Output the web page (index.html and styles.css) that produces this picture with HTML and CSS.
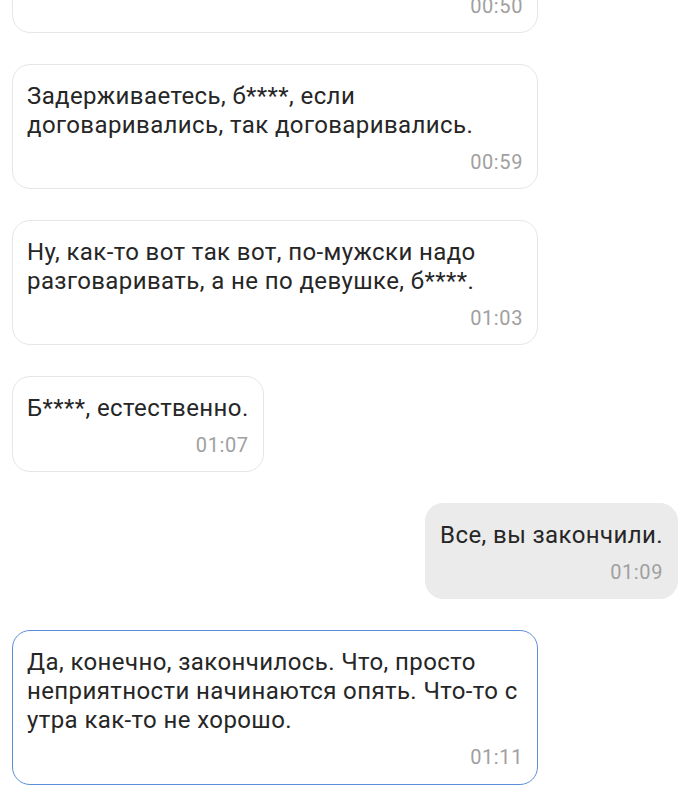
FILE: index.html
```html
<!DOCTYPE html>
<html lang="ru">
<head>
    <meta charset="UTF-8">
    <meta name="viewport" content="width=device-width, initial-scale=1.0">
    <title>Чат</title>
    <link rel="stylesheet" href="styles.css">
</head>
<body>
    <div class="chat">
        <div class="msg in clipped">
            <div class="time">00:50</div>
        </div>

        <div class="msg in">
            <p class="text">Задерживаетесь, б****, если договаривались, так договаривались.</p>
            <div class="time">00:59</div>
        </div>

        <div class="msg in">
            <p class="text">Ну, как-то вот так вот, по-мужски надо разговаривать, а не по девушке, б****.</p>
            <div class="time">01:03</div>
        </div>

        <div class="msg in">
            <p class="text">Б****, естественно.</p>
            <div class="time">01:07</div>
        </div>

        <div class="msg out">
            <p class="text">Все, вы закончили.</p>
            <div class="time">01:09</div>
        </div>

        <div class="msg in selected">
            <p class="text">Да, конечно, закончилось. Что, просто неприятности начинаются опять. Что-то с утра как-то не хорошо.</p>
            <div class="time">01:11</div>
        </div>
    </div>
</body>
</html>
```

FILE: styles.css
```css
body { margin: 0; background: #fff; font-family: Roboto, "Noto Sans", sans-serif; color: #262626; }
.chat { display: flex; flex-direction: column; align-items: flex-start; gap: 31px; padding: 0 22px 0 12px; }
.msg { box-sizing: border-box; max-width: 526px; padding: 17px 14px 15px; border: 1px solid #e6e6e6; border-radius: 18px; background: #fff; }
.msg.in { width: fit-content; }
.msg.clipped { width: 526px; margin-top: -34px; }
.msg.out { align-self: flex-end; background: #ebebeb; border-color: #ebebeb; }
.msg.selected { border: 1.5px solid #5b8ed8; padding-bottom: 16px; }
.text { margin: 0; font-size: 24px; line-height: 29px; letter-spacing: 0.4px; }
.time { margin-top: 11px; text-align: right; font-size: 20px; line-height: 22px; letter-spacing: 0.6px; color: #a0a0a0; }
```
